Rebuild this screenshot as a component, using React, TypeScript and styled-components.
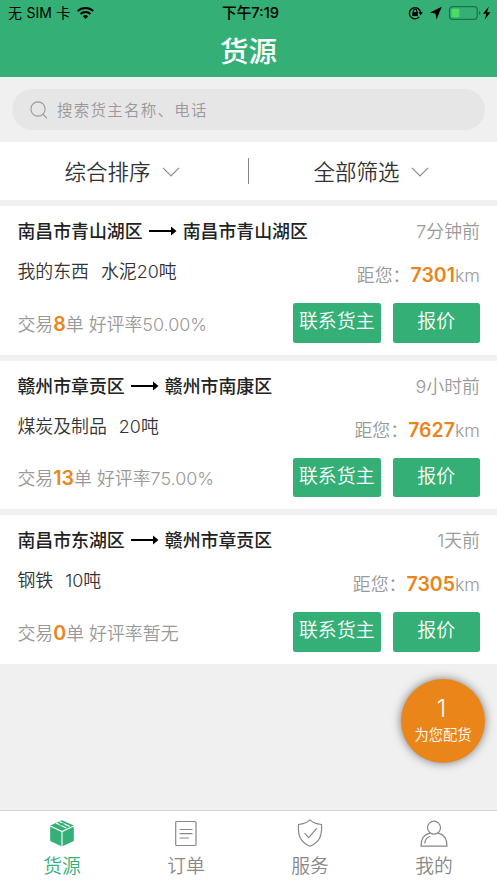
import React from "react";
import styled, { createGlobalStyle } from "styled-components";

const GREEN = "#34b076";
const ORANGE = "#ea8519";

const GlobalStyle = createGlobalStyle`
  * { box-sizing: border-box; }
  html, body { margin: 0; padding: 0; }
  body {
    font-family: Inter, "Noto Sans CJK SC", sans-serif;
    color: #333;
    background: #f0f0f0;
  }
  button { font: inherit; border: 0; padding: 0; margin: 0; background: none; }
`;

const Screen = styled.div`
  display: flex;
  flex-direction: column;
  width: 497px;
  height: 883px;
  overflow: hidden;
  background: #f0f0f0;
`;

const Header = styled.header`
  height: 77px;
  flex: none;
  background: ${GREEN};
`;

const StatusBar = styled.div`
  display: grid;
  grid-template-columns: 1fr auto 1fr;
  align-items: center;
  height: 26px;
  padding: 0 6px 0 8px;
  color: #000;
  font-size: 14px;
  line-height: 26px;
`;

const Carrier = styled.div`
  display: flex;
  align-items: center;
  gap: 7px;
  word-spacing: 0.5px;
`;

const Clock = styled.div`
  padding-left: 2px;
  font-size: 14.7px;
  font-weight: 500;
`;

const StatusIcons = styled.div`
  display: flex;
  align-items: center;
  justify-content: flex-end;
`;

const Title = styled.h1`
  margin: 0;
  height: 51px;
  padding-top: 1px;
  color: #fff;
  font-size: 28.5px;
  font-weight: 500;
  line-height: 50px;
  text-align: center;
`;

const SearchArea = styled.div`
  flex: none;
  height: 65px;
  padding: 12px;
`;

const SearchBox = styled.div`
  display: flex;
  align-items: center;
  gap: 10px;
  height: 41px;
  padding-left: 18px;
  border-radius: 21px;
  background: #e6e6e6;
  color: #999;
  font-size: 15.5px;
  font-weight: 350;
  letter-spacing: 1.25px;
`;

const SearchHint = styled.span`
  padding-bottom: 2px;
`;

const FilterBar = styled.div`
  display: grid;
  grid-template-columns: 1fr 1px 1fr;
  align-items: center;
  flex: none;
  height: 58px;
  background: #fff;
`;

const FilterDivider = styled.div`
  height: 26px;
  background: #888;
`;

const Filter = styled.div`
  display: flex;
  align-items: center;
  gap: 11px;
  padding: 1px 0 0 64.5px;
  font-size: 21.5px;
  line-height: 32px;
  font-weight: 350;
`;

const List = styled.main`
  display: flex;
  flex: 1;
  flex-direction: column;
  gap: 6px;
  padding-top: 6px;
`;

const Card = styled.article`
  flex: none;
  height: 148.6px;
  padding: 0 17px 0 17.4px;
  background: #fff;
  font-size: 17.9px;
`;

const RouteRow = styled.div`
  display: flex;
  align-items: center;
  justify-content: space-between;
  height: 48px;
`;

const Route = styled.div`
  display: flex;
  align-items: center;
  gap: 6px;
  font-weight: 500;
  color: #222;

  svg { margin-top: 2px; }
`;

const Muted = styled.span`
  color: #999;
  font-weight: 350;
`;

const GoodsRow = styled.div`
  display: flex;
  justify-content: space-between;
  height: 33px;
  padding-top: 2px;
  line-height: 31px;
`;

const Goods = styled.div`
  display: flex;
  gap: 12px;
  font-weight: 350;
`;

const Distance = styled(Muted)`
  padding-top: 4px;
`;

const Strong = styled.b<{ $size: number }>`
  color: ${ORANGE};
  font-size: ${(p) => p.$size}px;
  font-weight: 600;
`;

const ActionRow = styled.div`
  display: flex;
  align-items: center;
  justify-content: space-between;
  height: 39.5px;
  margin-top: 16px;
`;

const Rating = styled(Muted)`
  padding-top: 3px;
  line-height: 30px;
`;

const Actions = styled.div`
  display: flex;
  gap: 12px;
`;

const ActionButton = styled.button`
  display: flex;
  justify-content: center;
  width: 87.5px;
  height: 39.5px;
  border-radius: 2.5px;
  background: ${GREEN};
  color: #fff;
  font-size: 18.9px;
  font-weight: 350;
  line-height: 38px;
  white-space: nowrap;
`;

const MatchBubble = styled.div`
  position: absolute;
  left: 401px;
  top: 679px;
  display: flex;
  flex-direction: column;
  align-items: center;
  width: 84px;
  height: 84px;
  padding-top: 14px;
  border-radius: 50%;
  background: ${ORANGE};
  box-shadow: 0 0 10px rgba(0, 0, 0, 0.5);
  color: #fff;
  font-size: 14.3px;
  font-weight: 350;
  line-height: 20px;
`;

const MatchCount = styled.div`
  height: 32px;
  margin-left: -3px;
  font-size: 24px;
  line-height: 32px;
`;

const TabBar = styled.nav`
  display: grid;
  grid-template-columns: repeat(4, 1fr);
  flex: none;
  height: 73px;
  padding-right: 1px;
  border-top: 1px solid #d2d2d2;
  background: #fff;
`;

const Tab = styled.div<{ $active?: boolean }>`
  display: flex;
  flex-direction: column;
  align-items: center;
  padding-top: 8px;
  color: ${(p) => (p.$active ? GREEN : "#888")};
  font-size: 18.8px;
  font-weight: 350;
  line-height: 35px;

  svg { flex: none; }
`;

const WifiIcon = () => (
  <svg width="17" height="12" viewBox="0 0 17 12" fill="none" stroke="#000" strokeWidth="2.1">
    <path d="M.8 4.1a11 11 0 0 1 15.4 0" />
    <path d="M3.6 7a7 7 0 0 1 9.8 0" />
    <path d="M5.9 9.2a3.8 3.8 0 0 1 5.2 0L8.5 11.9Z" fill="#000" stroke="none" />
  </svg>
);

const StatusGlyphs = () => (
  <svg width="83" height="16" viewBox="0 0 83 16" fill="none">
    <g stroke="#000" strokeWidth="1.3">
      <path d="M11.2 11.9A5.6 5.6 0 1 1 12.6 8" />
      <path d="M5.4 7.2V5.9a1.7 1.7 0 0 1 3.4 0v1.3" />
    </g>
    <path d="M4.3 7h5.5v4H4.3ZM10.5 7.3h4.4l-2.2 3Z" fill="#000" />
    <path d="M33.8 1.8 22 7.6l5.5 1 1 6Z" fill="#000" />
    <rect x="41.5" y="1.7" width="27.7" height="12.6" rx="3" stroke="#1c7249" strokeWidth="1.2" />
    <rect x="43.5" y="3.7" width="7.8" height="8.6" rx="1" fill="#4bdc65" />
    <path d="M71 6v4c2-.7 2-3.3 0-4Z" fill="#1c7249" />
    <path d="M80.8 1.6 75 8.7h3.2l-1.3 5.8 5.5-7.2h-3.3Z" fill="#000" />
  </svg>
);

const SearchIcon = () => (
  <svg width="17" height="18" viewBox="0 0 17 18" fill="none" stroke="#999" strokeWidth="1.1">
    <circle cx="8" cy="8" r="7.1" />
    <path d="m13 13.1 3.4 3.8" strokeLinecap="round" />
  </svg>
);

const Chevron = () => (
  <svg width="18" height="10" viewBox="0 0 18 10" fill="none" stroke="#8c8c8c" strokeWidth="1.2">
    <path d="m1 .8 8 8 8-8" />
  </svg>
);

const LongArrow = () => (
  <svg width="28" height="10" viewBox="0 0 28 10">
    <path d="M0 4.1h22V.5L27.5 5 22 9.5V5.9H0Z" fill="#000" />
  </svg>
);

const BoxIcon = () => (
  <svg width="26" height="30" viewBox="0 0 26 30">
    <path d="m13 1.2 11.8 5.2v15.7L13 27.4 1.2 22.1V6.4Z" fill={GREEN} />
    <path d="m1.2 7 11.8 5.6L24.8 7M13 12.6v14.8M7 4.1l10.4 5M10.4 2.5l10.4 5" fill="none" stroke="#fff" strokeWidth="1.1" />
    <path d="m10.2 5.6 3.4-1.6 2.2 1.1-3.4 1.6Z" fill={GREEN} />
  </svg>
);

const OrderIcon = () => (
  <svg width="26" height="30" viewBox="0 0 26 30" fill="none" stroke="#888" strokeWidth="1.2">
    <rect x="2.7" y="2.5" width="20.3" height="24" rx="1" />
    <path d="M7 10.5h12M7 14.7h12M7 19h8.5" strokeLinecap="round" />
  </svg>
);

const ShieldIcon = () => (
  <svg width="26" height="30" viewBox="0 0 26 30" fill="none" stroke="#888" strokeWidth="1.2">
    <path d="M13 .9C15.5 3.3 19 4.9 24.5 5.5c.7 11-1.8 18-11.5 21.8C3.3 23.5.8 16.5 1.5 5.5 7 4.9 10.5 3.3 13 .9Z" />
    <path d="m7.6 14.1 4.1 4.5 8-9.2" />
  </svg>
);

const UserIcon = () => (
  <svg width="28" height="30" viewBox="0 0 28 30" fill="none" stroke="#888" strokeWidth="1.2">
    <circle cx="14" cy="8.7" r="6.5" />
    <path d="M10 14.2C4.5 15.3 1 19.8 1 27.2h26c0-7.4-3.5-11.9-9-13" />
    <path d="M4.8 24.5c.2-3.7 2-6.1 5.5-7.2" />
  </svg>
);

const loads = [
  { from: "南昌市青山湖区", to: "南昌市青山湖区", time: "7分钟前", goods: "我的东西", weight: "水泥20吨", km: "7301", deals: "8", rating: "50.00%" },
  { from: "赣州市章贡区", to: "赣州市南康区", time: "9小时前", goods: "煤炭及制品", weight: "20吨", km: "7627", deals: "13", rating: "75.00%" },
  { from: "南昌市东湖区", to: "赣州市章贡区", time: "1天前", goods: "钢铁", weight: "10吨", km: "7305", deals: "0", rating: "暂无" },
];

export default function App() {
  return (
    <Screen>
      <GlobalStyle />
      <Header>
        <StatusBar>
          <Carrier>无 SIM 卡<WifiIcon /></Carrier>
          <Clock>下午7:19</Clock>
          <StatusIcons><StatusGlyphs /></StatusIcons>
        </StatusBar>
        <Title>货源</Title>
      </Header>
      <SearchArea>
        <SearchBox><SearchIcon /><SearchHint>搜索货主名称、电话</SearchHint></SearchBox>
      </SearchArea>
      <FilterBar>
        <Filter>综合排序<Chevron /></Filter>
        <FilterDivider />
        <Filter>全部筛选<Chevron /></Filter>
      </FilterBar>
      <List>
        {loads.map((load) => (
          <Card key={load.km}>
            <RouteRow>
              <Route>{load.from}<LongArrow />{load.to}</Route>
              <Muted>{load.time}</Muted>
            </RouteRow>
            <GoodsRow>
              <Goods><span>{load.goods}</span><span>{load.weight}</span></Goods>
              <Distance>距您：<Strong $size={19.5}>{load.km}</Strong>km</Distance>
            </GoodsRow>
            <ActionRow>
              <Rating>交易<Strong $size={19.6}>{load.deals}</Strong>单 好评率{load.rating}</Rating>
              <Actions>
                <ActionButton>联系货主</ActionButton>
                <ActionButton>报价</ActionButton>
              </Actions>
            </ActionRow>
          </Card>
        ))}
      </List>
      <MatchBubble><MatchCount>1</MatchCount>为您配货</MatchBubble>
      <TabBar>
        <Tab $active><BoxIcon />货源</Tab>
        <Tab><OrderIcon />订单</Tab>
        <Tab><ShieldIcon />服务</Tab>
        <Tab><UserIcon />我的</Tab>
      </TabBar>
    </Screen>
  );
}
